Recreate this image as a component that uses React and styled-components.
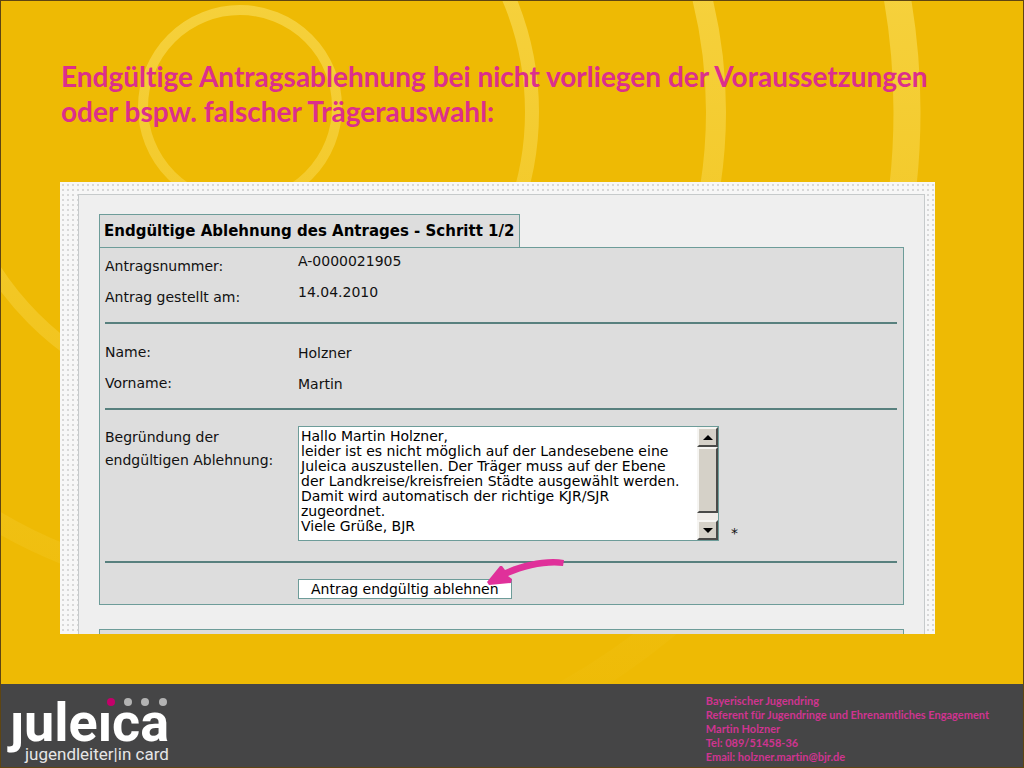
import React, { useState } from 'react';
import styled, { createGlobalStyle } from 'styled-components';

const GlobalStyle = createGlobalStyle`
  * {
    box-sizing: border-box;
  }

  body {
    margin: 0;
    background: #eeba04;
  }
`;

const Slide = styled.div`
  position: relative;
  display: flex;
  flex-direction: column;
  min-height: 100vh;
  border: 1px solid #5e4512;
  background: #eeba04;
  overflow: hidden;
`;

const Rings = styled.svg`
  position: absolute;
  top: 0;
  left: 0;
  width: 1024px;
  height: 768px;
`;

const Main = styled.main`
  position: relative;
  flex: 1;
  padding: 58px 88px 50px 59px;
`;

const Title = styled.h1`
  margin: 0 0 53px 1px;
  font-family: Lato, 'Open Sans', sans-serif;
  font-size: 28px;
  font-weight: 700;
  font-variant-ligatures: none;
  line-height: 35px;
  color: #dc2f8c;
`;

const Panel = styled.div`
  padding: 12px 10px 0 18px;
  background-color: #f7f7f7;
  background-image: radial-gradient(circle at 3px 3px, #d8d8d8 1px, transparent 1px);
  background-size: 5px 5px;
`;

const PanelBody = styled.div`
  padding: 19px 20px 0;
  border: 1px solid #c6cacb;
  border-bottom: 0;
  background: #efefef;
  font-family: 'DejaVu Sans', Verdana, sans-serif;
  font-size: 14px;
  color: #111;
`;

const Tab = styled.h2`
  width: fit-content;
  margin: 0;
  padding: 0 5px 0 4px;
  border: 1px solid #6d9c99;
  border-bottom: 0;
  background: #ddd;
  font-size: 15px;
  line-height: 32px;
  color: #000;
`;

const Box = styled.form`
  padding: 3px 6px 5px 5px;
  border: 1px solid #6d9c99;
  background: #ddd;
`;

const NextBox = styled.div`
  height: 5px;
  margin-top: 24px;
  border: 1px solid #6d9c99;
  border-bottom: 0;
  background: #ddd;
`;

const List = styled.dl`
  margin: 0;
`;

const Row = styled.div`
  display: grid;
  grid-template-columns: 193px 1fr;
  align-items: ${(props) => (props.$top ? 'start' : 'center')};
  min-height: 31px;
`;

const Term = styled.dt`
  line-height: 23px;
`;

const Value = styled.dd`
  margin: 0;
  align-self: ${(props) => (props.$raised ? 'start' : 'center')};
  line-height: 20px;
`;

const Rule = styled.hr`
  height: 2px;
  margin: 9px 0 13px;
  border: 0;
  background: #58807e;
`;

const ReasonRow = styled(Row)`
  padding: 3px 0 11px;
`;

const ReasonLabel = styled.label`
  line-height: 23px;
`;

const ReasonField = styled.div`
  display: flex;
  align-items: flex-end;
  gap: 12px;
`;

const TextBox = styled.div`
  display: flex;
  width: 421px;
  height: 115px;
  border: 1px solid #6d9c99;
  background: #fff;
`;

const TextArea = styled.textarea`
  flex: 1;
  min-width: 0;
  padding: 2px;
  border: 0;
  outline: none;
  resize: none;
  overflow: hidden;
  white-space: pre;
  background: #fff;
  color: #000;
  font-family: 'DejaVu Sans', Verdana, sans-serif;
  font-size: 14px;
  line-height: 15px;
`;

const ScrollBar = styled.div`
  display: flex;
  flex-direction: column;
  width: 21px;
  background: #efece8;
`;

const ScrollButton = styled.button`
  display: flex;
  align-items: center;
  justify-content: center;
  height: 20px;
  padding: 0;
  border: 2px solid;
  border-color: #f6f5f2 #4a4a48 #4a4a48 #f6f5f2;
  background: #d5d1c8;
`;

const ScrollThumb = styled.div`
  height: 66px;
  margin-bottom: auto;
  border: 2px solid;
  border-color: #f6f5f2 #4a4a48 #4a4a48 #f6f5f2;
  background: #d5d1c8;
`;

const Required = styled.span`
  line-height: 16px;
`;

const Actions = styled.div`
  padding: 3px 0 0 193px;
`;

const ActionWrap = styled.div`
  position: relative;
  width: fit-content;
`;

const SubmitButton = styled.button`
  height: 20px;
  padding: 0 12px;
  border: 1px solid #6d9c99;
  background: #fff;
  color: #000;
  font-family: 'DejaVu Sans', Verdana, sans-serif;
  font-size: 14px;
  line-height: 18px;
`;

const Arrow = styled.svg`
  position: absolute;
  top: -21px;
  right: -54px;
  width: 80px;
  height: 28px;
  pointer-events: none;
`;

const Footer = styled.footer`
  position: relative;
  display: flex;
  justify-content: space-between;
  padding: 10px 34px 3px 5px;
  background: #454546;
`;

const Logo = styled.svg`
  width: 170px;
  height: 70px;
  overflow: visible;
`;

const Contact = styled.address`
  font-family: Lato, 'Open Sans', sans-serif;
  font-size: 11px;
  font-style: normal;
  font-weight: 700;
  font-variant-ligatures: none;
  line-height: 14px;
  color: #cf3490;
`;

const MailLink = styled.a`
  color: inherit;
  text-decoration: none;
`;

const initialReason = `Hallo Martin Holzner,
leider ist es nicht möglich auf der Landesebene eine
Juleica auszustellen. Der Träger muss auf der Ebene
der Landkreise/kreisfreien Städte ausgewählt werden.
Damit wird automatisch der richtige KJR/SJR
zugeordnet.
Viele Grüße, BJR`;

const applicationData = [
  { label: 'Antragsnummer:', value: 'A-0000021905' },
  { label: 'Antrag gestellt am:', value: '14.04.2010' },
];

const personData = [
  { label: 'Name:', value: 'Holzner' },
  { label: 'Vorname:', value: 'Martin' },
];

const BackgroundRings = () => (
  <Rings viewBox="1 1 1024 768" aria-hidden="true">
    <defs>
      <linearGradient id="fade" gradientUnits="userSpaceOnUse" x1="0" y1="0" x2="0" y2="700">
        <stop offset="0" stopColor="#ffec80" stopOpacity="0.45" />
        <stop offset="0.5" stopColor="#ffec80" stopOpacity="0.22" />
        <stop offset="0.9" stopColor="#ffec80" stopOpacity="0.05" />
        <stop offset="1" stopColor="#ffec80" stopOpacity="0.02" />
      </linearGradient>
    </defs>
    <g fill="none" stroke="url(#fade)">
      <circle cx="240" cy="107" r="97" strokeWidth="10" />
      <circle cx="240" cy="112" r="292" strokeWidth="14" />
      <circle cx="240" cy="112" r="476" strokeWidth="20" />
      <circle cx="240" cy="112" r="667" strokeWidth="27" />
    </g>
  </Rings>
);

const JuleicaLogo = () => (
  <Logo viewBox="6 694 170 70" role="img" aria-label="juleica jugendleiter|in card">
    <text x="10" y="741" fill="#fff" fontFamily="Roboto, sans-serif" fontWeight="700" fontSize="54">
      juleica
    </text>
    <rect x="6" y="694" width="22" height="16" fill="#454546" />
    <rect x="99" y="694" width="19" height="16" fill="#454546" />
    <circle cx="111" cy="702" r="4" fill="#c4006a" />
    <circle cx="128" cy="702" r="4" fill="#b3b3b3" />
    <circle cx="145" cy="702" r="4" fill="#b3b3b3" />
    <circle cx="163" cy="702" r="4" fill="#b3b3b3" />
    <text x="25" y="760" fill="#e6e6e6" fontFamily="Roboto, sans-serif" fontSize="17">
      jugendleiter|in card
    </text>
  </Logo>
);

const App = () => {
  const [reason, setReason] = useState(initialReason);

  const handleSubmit = (e) => {
    e.preventDefault();
  };

  return (
    <>
      <GlobalStyle />
      <Slide>
        <BackgroundRings />
        <Main>
          <Title>
            Endgültige Antragsablehnung bei nicht vorliegen der Voraussetzungen
            <br />
            oder bspw. falscher Trägerauswahl:
          </Title>

          <Panel>
            <PanelBody>
              <Tab>Endgültige Ablehnung des Antrages - Schritt 1/2</Tab>
              <Box onSubmit={handleSubmit}>
                <List>
                  {applicationData.map((item) => (
                    <Row key={item.label}>
                      <Term>{item.label}</Term>
                      <Value $raised>{item.value}</Value>
                    </Row>
                  ))}
                </List>
                <Rule />
                <List>
                  {personData.map((item) => (
                    <Row key={item.label}>
                      <Term>{item.label}</Term>
                      <Value>{item.value}</Value>
                    </Row>
                  ))}
                </List>
                <Rule />
                <ReasonRow $top>
                  <ReasonLabel htmlFor="reason">
                    Begründung der
                    <br />
                    endgültigen Ablehnung:
                  </ReasonLabel>
                  <ReasonField>
                    <TextBox>
                      <TextArea
                        id="reason"
                        required
                        spellCheck={false}
                        value={reason}
                        onChange={(e) => setReason(e.target.value)}
                      />
                      <ScrollBar>
                        <ScrollButton type="button" aria-label="Nach oben">
                          <svg width="10" height="5" viewBox="0 0 10 5">
                            <path d="M5 0 L10 5 H0 Z" />
                          </svg>
                        </ScrollButton>
                        <ScrollThumb />
                        <ScrollButton type="button" aria-label="Nach unten">
                          <svg width="10" height="5" viewBox="0 0 10 5">
                            <path d="M0 0 H10 L5 5 Z" />
                          </svg>
                        </ScrollButton>
                      </ScrollBar>
                    </TextBox>
                    <Required>*</Required>
                  </ReasonField>
                </ReasonRow>
                <Rule />
                <Actions>
                  <ActionWrap>
                    <SubmitButton type="submit">Antrag endgültig ablehnen</SubmitButton>
                    <Arrow viewBox="487 558 80 28" aria-hidden="true">
                      <path
                        d="M565 560 C548 557 524 562 506 570 L503 566 L501 566 L488 582 L490 585 L512 583 L513 579 L509 576 C528 568 548 564 564 566 Z"
                        fill="#e0309a"
                      />
                    </Arrow>
                  </ActionWrap>
                </Actions>
              </Box>
              <NextBox />
            </PanelBody>
          </Panel>
        </Main>

        <Footer>
          <JuleicaLogo />
          <Contact>
            Bayerischer Jugendring
            <br />
            Referent für Jugendringe und Ehrenamtliches Engagement
            <br />
            Martin Holzner
            <br />
            Tel: 089/51458-36
            <br />
            Email: <MailLink href="mailto:holzner.martin@bjr.de">holzner.martin@bjr.de</MailLink>
          </Contact>
        </Footer>
      </Slide>
    </>
  );
};

export default App;
